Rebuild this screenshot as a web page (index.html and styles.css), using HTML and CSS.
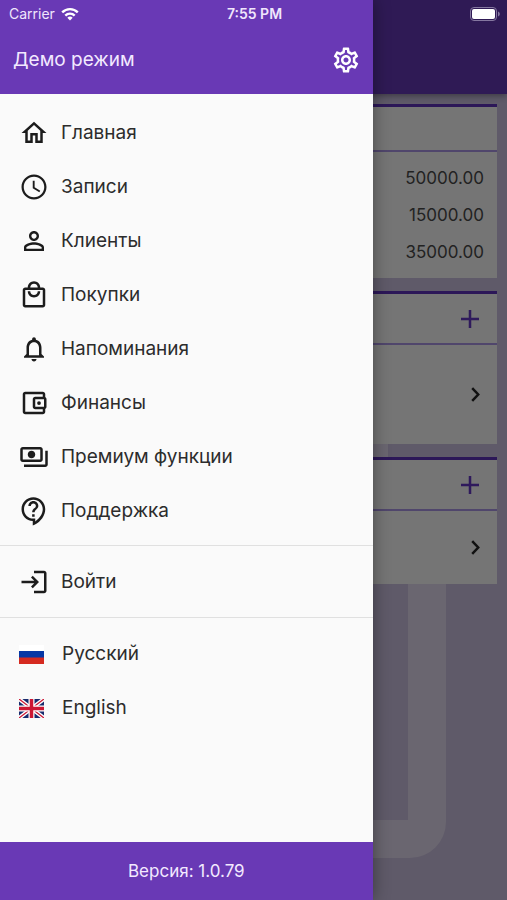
FILE: index.html
```html
<!DOCTYPE html>
<html lang="ru">
<head>
<meta charset="utf-8">
<meta name="viewport" content="width=device-width, initial-scale=1">
<title>Демо режим</title>
<link rel="stylesheet" href="styles.css">
</head>
<body>
<div class="app">
  <div class="page">
    <div class="page-bar"></div>
    <main class="cards">
      <svg class="backdrop" viewBox="0 0 507 806" preserveAspectRatio="xMaxYMin slice" aria-hidden="true">
        <path d="M300 340h88v30h-88zM408 440h38v288a36 36 0 0 1-36 36H300v-38h108z"/>
      </svg>
      <section class="card">
        <div class="card-head summary-head"></div>
        <div class="amounts">
          <span>50000.00</span>
          <span>15000.00</span>
          <span>35000.00</span>
        </div>
      </section>
      <section class="card">
        <div class="card-head">
          <button class="icon-button" type="button" aria-label="Добавить"><svg class="plus" viewBox="0 0 18 18"><path d="M9 0v18M0 9h18"/></svg></button>
        </div>
        <a class="card-link tall" href="#" aria-label="Открыть"><svg class="chevron" viewBox="0 0 9 15"><path d="M1.2 1.2l6 6.3-6 6.3"/></svg></a>
      </section>
      <section class="card">
        <div class="card-head">
          <button class="icon-button" type="button" aria-label="Добавить"><svg class="plus" viewBox="0 0 18 18"><path d="M9 0v18M0 9h18"/></svg></button>
        </div>
        <a class="card-link" href="#" aria-label="Открыть"><svg class="chevron" viewBox="0 0 9 15"><path d="M1.2 1.2l6 6.3-6 6.3"/></svg></a>
      </section>
    </main>
  </div>

  <aside class="drawer">
    <header class="drawer-head">
      <h1>Демо режим</h1>
      <button class="icon-button" type="button" aria-label="Настройки">
        <svg class="gear" viewBox="0 0 24 24"><path d="M19.43 12.98c.04-.32.07-.64.07-.98 0-.34-.03-.66-.07-.98l2.11-1.65c.19-.15.24-.42.12-.64l-2-3.46c-.09-.16-.26-.25-.44-.25-.06 0-.12.01-.17.03l-2.49 1c-.52-.4-1.08-.73-1.69-.98l-.38-2.65C14.46 2.18 14.25 2 14 2h-4c-.25 0-.46.18-.49.42l-.38 2.65c-.61.25-1.17.59-1.69.98l-2.49-1c-.06-.02-.12-.03-.18-.03-.17 0-.34.09-.43.25l-2 3.46c-.13.22-.07.49.12.64l2.11 1.65c-.04.32-.07.65-.07.98 0 .33.03.66.07.98l-2.11 1.65c-.19.15-.24.42-.12.64l2 3.46c.09.16.26.25.44.25.06 0 .12-.01.17-.03l2.49-1c.52.4 1.08.73 1.69.98l.38 2.65c.03.24.24.42.49.42h4c.25 0 .46-.18.49-.42l.38-2.65c.61-.25 1.17-.59 1.69-.98l2.49 1c.06.02.12.03.18.03.17 0 .34-.09.43-.25l2-3.46c.12-.22.07-.49-.12-.64l-2.11-1.65zm-1.98-1.71c.04.31.05.52.05.73 0 .21-.02.43-.05.73l-.14 1.13.89.7 1.08.84-.7 1.21-1.27-.51-1.04-.42-.9.68c-.43.32-.84.56-1.25.73l-1.06.43-.16 1.13-.2 1.35h-1.4l-.19-1.35-.16-1.13-1.06-.43c-.43-.18-.83-.41-1.23-.71l-.91-.7-1.06.43-1.27.51-.7-1.21 1.08-.84.89-.7-.14-1.13c-.03-.31-.05-.54-.05-.74s.02-.43.05-.73l.14-1.13-.89-.7-1.08-.84.7-1.21 1.27.51 1.04.42.9-.68c.43-.32.84-.56 1.25-.73l1.06-.43.16-1.13.2-1.35h1.39l.19 1.35.16 1.13 1.06.43c.43.18.83.41 1.23.71l.91.7 1.06-.43 1.27-.51.7 1.21-1.07.85-.89.7.14 1.13zM12 8c-2.21 0-4 1.79-4 4s1.79 4 4 4 4-1.79 4-4-1.79-4-4-4zm0 6c-1.1 0-2-.9-2-2s.9-2 2-2 2 .9 2 2-.9 2-2 2z"/></svg>
      </button>
    </header>
    <nav class="menu">
      <ul>
        <li><a href="#"><svg class="icon" viewBox="0 0 24 24"><path d="M12 5.69l5 4.5V18h-2v-6H9v6H7v-7.81l5-4.5M12 3L2 12h3v8h6v-6h2v6h6v-8h3L12 3z"/></svg>Главная</a></li>
        <li><a href="#"><svg class="icon" viewBox="0 0 24 24"><path d="M11.99 2C6.47 2 2 6.48 2 12s4.47 10 9.99 10C17.52 22 22 17.52 22 12S17.52 2 11.99 2zM12 20.2c-4.53 0-8.2-3.67-8.2-8.2s3.67-8.2 8.2-8.2 8.2 3.67 8.2 8.2-3.67 8.2-8.2 8.2zM12.5 7H11v6l5.25 3.15.75-1.23-4.5-2.67z"/></svg>Записи</a></li>
        <li><a href="#"><svg class="icon" viewBox="0 0 24 24"><path d="M12 5.9c1.16 0 2.1.94 2.1 2.1s-.94 2.1-2.1 2.1S9.900 9.160 9.900 8s.94-2.100 2.100-2.100m0 9c2.970 0 6.100 1.460 6.100 2.100v1.100H5.900V17c0-.64 3.130-2.100 6.100-2.100M12 4C9.790 4 8 5.790 8 8s1.790 4 4 4 4-1.790 4-4-1.790-4-4-4zm0 9c-2.670 0-8 1.340-8 4v3h16v-3c0-2.660-5.330-4-8-4z"/></svg>Клиенты</a></li>
        <li><a href="#"><svg class="icon" viewBox="0 0 24 24"><path d="M19 6h-2c0-2.760-2.240-5-5-5S7 3.240 7 6H5c-1.100 0-2 .9-2 2v12c0 1.100.9 2 2 2h14c1.100 0 2-.9 2-2V8c0-1.100-.9-2-2-2zm-7-3c1.660 0 3 1.340 3 3H9c0-1.660 1.340-3 3-3zm7 17H5V8h14v12zm-7-8c-1.660 0-3-1.340-3-3H7c0 2.760 2.240 5 5 5s5-2.240 5-5h-2c0 1.660-1.340 3-3 3z"/></svg>Покупки</a></li>
        <li><a href="#"><svg class="icon" viewBox="0 0 24 24"><path d="M12 22c1.100 0 2-.9 2-2h-4c0 1.100.9 2 2 2zm6-6v-5c0-3.070-1.630-5.640-4.500-6.320V4c0-.83-.67-1.500-1.500-1.500s-1.500.67-1.500 1.500v.68C7.640 5.360 6 7.920 6 11v5l-2 2v1h16v-1l-2-2zm-2 1H8v-6c0-2.480 1.510-4.500 4-4.500s4 2.020 4 4.500v6z"/></svg>Напоминания</a></li>
        <li><a href="#"><svg class="icon" viewBox="0 0 24 24"><path d="M21 7.280V5c0-1.100-.9-2-2-2H5c-1.110 0-2 .9-2 2v14c0 1.100.89 2 2 2h14c1.100 0 2-.9 2-2v-2.280c.59-.35 1-.98 1-1.720V9c0-.74-.41-1.370-1-1.720zM20 9v6h-7V9h7zM5 19V5h14v2h-6c-1.100 0-2 .9-2 2v6c0 1.100.9 2 2 2h6v2H5z"/><circle cx="16" cy="12" r="1.5"/></svg>Финансы</a></li>
        <li><a href="#"><svg class="icon" viewBox="0 0 24 24"><path d="M19 14V6c0-1.100-.9-2-2-2H3c-1.100 0-2 .9-2 2v8c0 1.100.9 2 2 2h14c1.100 0 2-.9 2-2zm-2 0H3V6h14v8zm-7-7c-1.660 0-3 1.340-3 3s1.340 3 3 3 3-1.340 3-3-1.340-3-3-3zm13 0v11c0 1.100-.9 2-2 2H4v-2h17V7h2z"/></svg>Премиум функции</a></li>
        <li><a href="#"><svg class="icon" viewBox="0 0 24 24"><path d="M11 23.590v-3.600c-5.010-.26-9-4.420-9-9.490C2 5.260 6.260 1 11.500 1S21 5.260 21 10.500c0 4.950-3.440 9.930-8.570 12.400l-1.430.69zM11.500 3C7.360 3 4 6.360 4 10.500S7.360 18 11.500 18H13v2.300c3.640-2.300 6-6.080 6-9.800C19 6.360 15.640 3 11.500 3zm-1 11.500h2v2h-2zm2-1.500h-2c0-3.250 3-3 3-5 0-1.100-.9-2-2-2s-2 .9-2 2h-2c0-2.210 1.790-4 4-4s4 1.790 4 4c0 2.500-3 2.750-3 5z"/></svg>Поддержка</a></li>
      </ul>
      <ul>
        <li><a href="#"><svg class="icon" viewBox="0 0 24 24"><path d="M2 11h10.2L9.600 8.400 11 7l5 5-5 5-1.400-1.400L12.200 13H2zM12 3h8c1.100 0 2 .9 2 2v14c0 1.100-.9 2-2 2h-8v-2h8V5h-8z"/></svg>Войти</a></li>
      </ul>
      <ul class="languages">
        <li><a href="#" lang="ru"><svg class="flag" viewBox="0 0 25 19"><path fill="#fff" d="M0 0h25v7H0z"/><path fill="#0637a5" d="M0 6h25v7H0z"/><path fill="#d52a20" d="M0 12.500h25V19H0z"/></svg>Русский</a></li>
        <li><a href="#" lang="en"><svg class="flag" viewBox="0 0 25 19"><path fill="#172b6d" d="M0 0h25v19H0z"/><path stroke="#fff" stroke-width="4" d="M0 0l25 19M25 0L0 19"/><path stroke="#cc1633" stroke-width="1.3" d="M0 0l25 19M25 0L0 19"/><path stroke="#fff" stroke-width="6" d="M12.500 0v19M0 9.500h25"/><path stroke="#cc1633" stroke-width="3.5" d="M12.500 0v19M0 9.500h25"/></svg>English</a></li>
      </ul>
    </nav>
    <footer class="drawer-foot">Версия: 1.0.79</footer>
  </aside>

  <div class="status">
    <span class="carrier">Carrier <svg class="wifi" viewBox="0 0 18 14"><path d="M9 13.500l-2.700-2.700a3.900 3.900 0 0 1 5.400 0z"/><path class="arc" d="M4.300 8.600a6.700 6.700 0 0 1 9.400 0M1.200 5.300a11.200 11.200 0 0 1 15.600 0"/></svg></span>
    <time>7:55 PM</time>
    <svg class="battery" viewBox="0 0 30 14"><rect class="shell" x=".5" y=".5" width="26" height="13" rx="3.5"/><rect x="2" y="2" width="23" height="10" rx="2"/><path class="tip" d="M28 4.500c2.400.8 2.400 4.200 0 5z"/></svg>
  </div>
</div>
</body>
</html>
```

FILE: styles.css
```css
* {
  box-sizing: border-box;
}

body {
  margin: 0;
  font-family: Inter, "Liberation Sans", sans-serif;
  color: #2c2c2c;
}

h1,
ul {
  margin: 0;
  padding: 0;
  font-weight: 400;
  list-style: none;
}

a {
  color: inherit;
  text-decoration: none;
}

svg {
  display: block;
  flex: none;
}

.app {
  position: relative;
  min-height: 100vh;
  display: grid;
  overflow: hidden;
}

/* Dimmed page behind the drawer */
.page {
  display: flex;
  flex-direction: column;
  background: #5f5a69;
}

.page-bar {
  position: relative;
  z-index: 1;
  height: 94px;
  background: #2f1a55;
  box-shadow: 0 2px 6px rgba(0, 0, 0, 0.35);
}

.cards {
  position: relative;
  flex: 1;
  display: flex;
  flex-direction: column;
  gap: 13px;
  padding: 10px;
}

.backdrop {
  position: absolute;
  inset: 0;
  width: 100%;
  height: 100%;
  fill: #6a6670;
}

.card {
  position: relative;
  background: #757575;
  border-top: 3px solid #2c1758;
}

.card-head {
  display: flex;
  align-items: center;
  justify-content: flex-end;
  height: 51px;
  padding-right: 18px;
  border-bottom: 2px solid #50466c;
}

.summary-head {
  height: 45px;
}

.icon-button {
  padding: 0;
  border: 0;
  background: none;
  cursor: pointer;
}

.plus {
  width: 18px;
  height: 18px;
  fill: none;
  stroke: #2f1a5c;
  stroke-width: 2.5;
}

.amounts {
  display: grid;
  justify-items: end;
  padding: 8px 13px 7px;
  font-size: 17px;
  line-height: 37px;
  color: #222;
}

.card-link {
  display: flex;
  align-items: center;
  justify-content: flex-end;
  height: 73px;
  padding-right: 17px;
}

.card-link.tall {
  height: 99px;
}

.chevron {
  width: 9px;
  height: 15px;
  fill: none;
  stroke: #111;
  stroke-width: 2.5;
}

/* Drawer */
.drawer {
  position: absolute;
  inset: 0 auto 0 0;
  z-index: 2;
  width: 73.5%;
  display: flex;
  flex-direction: column;
  background: #fafafa;
  box-shadow: 0 0 16px rgba(0, 0, 0, 0.4);
}

.drawer-head {
  display: flex;
  align-items: center;
  justify-content: space-between;
  height: 94px;
  padding: 26px 12px 0 13px;
  background: #6939b5;
  color: #f3e9ff;
}

.drawer-head h1 {
  font-size: 19px;
  line-height: 24px;
}

.gear {
  width: 30px;
  height: 30px;
  fill: #fff;
}

.menu {
  flex: 1;
  padding-top: 3px;
}

.menu ul {
  padding: 9px 0 8px;
}

.menu ul:first-child {
  padding-bottom: 7px;
}

.menu ul + ul {
  border-top: 1px solid #e0e0e0;
}

.menu a {
  display: flex;
  align-items: center;
  gap: 12px;
  height: 54px;
  padding: 0 19px;
  font-size: 19px;
  line-height: 24px;
}

.menu .languages a {
  gap: 18px;
}

.icon {
  width: 30px;
  height: 30px;
  fill: #1c1c1c;
}

.flag {
  width: 25px;
  height: 19px;
}

.drawer-foot {
  display: flex;
  align-items: center;
  justify-content: center;
  height: 58px;
  background: #6939b5;
  color: #f3e9ff;
  font-size: 17px;
}

/* System status bar */
.status {
  position: absolute;
  inset: 0 0 auto;
  z-index: 3;
  display: grid;
  grid-template-columns: 1fr auto 1fr;
  align-items: center;
  height: 27px;
  padding: 0 7px 0 9px;
  font-size: 14px;
  color: #f0e6fc;
}

.status time {
  font-weight: 600;
}

.carrier {
  display: flex;
  align-items: center;
  gap: 6px;
}

.wifi {
  width: 18px;
  height: 14px;
  fill: #fff;
}

.wifi .arc {
  fill: none;
  stroke: #fff;
  stroke-width: 2.4;
}

.battery {
  justify-self: end;
  width: 30px;
  height: 14px;
  fill: #fff;
}

.battery .shell {
  fill: none;
  stroke: #8577a0;
}

.battery .tip {
  fill: #8577a0;
}
```
